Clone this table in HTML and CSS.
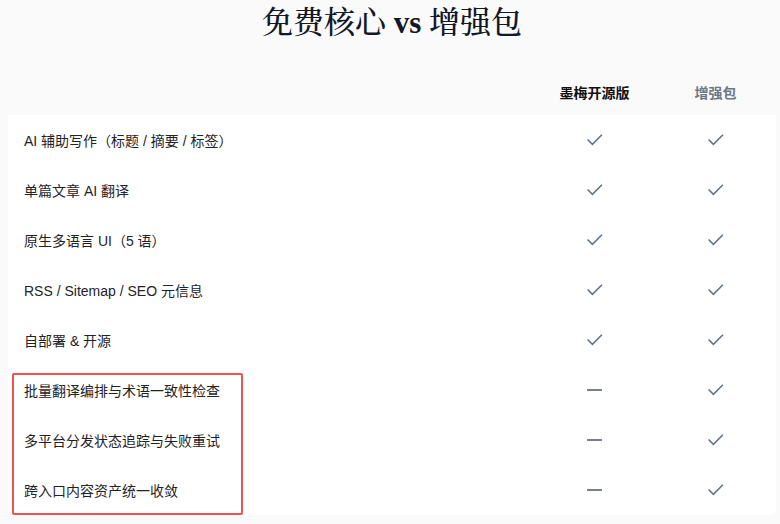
FILE: index.html
```html
<!DOCTYPE html>
<html lang="zh">
<head>
<meta charset="utf-8">
<link rel="stylesheet" href="styles.css">
</head>
<body>
<div class="page">
  <h1 class="title">免费核心 <span class="vs">vs</span> 增强包</h1>
  <div class="table">
    <div class="row head">
      <div class="cell feat"></div>
      <div class="cell plan core">墨梅开源版</div>
      <div class="cell plan pro">增强包</div>
    </div>
    <div class="body">
      <div class="row"><div class="cell feat">AI 辅助写作（标题 / 摘要 / 标签）</div><div class="cell mark"><svg class="check" viewBox="0 0 16 16"><polyline points="1.5,8 6,12.5 15,3.5"/></svg></div><div class="cell mark"><svg class="check" viewBox="0 0 16 16"><polyline points="1.5,8 6,12.5 15,3.5"/></svg></div></div>
      <div class="row"><div class="cell feat">单篇文章 AI 翻译</div><div class="cell mark"><svg class="check" viewBox="0 0 16 16"><polyline points="1.5,8 6,12.5 15,3.5"/></svg></div><div class="cell mark"><svg class="check" viewBox="0 0 16 16"><polyline points="1.5,8 6,12.5 15,3.5"/></svg></div></div>
      <div class="row"><div class="cell feat">原生多语言 UI（5 语）</div><div class="cell mark"><svg class="check" viewBox="0 0 16 16"><polyline points="1.5,8 6,12.5 15,3.5"/></svg></div><div class="cell mark"><svg class="check" viewBox="0 0 16 16"><polyline points="1.5,8 6,12.5 15,3.5"/></svg></div></div>
      <div class="row"><div class="cell feat">RSS / Sitemap / SEO 元信息</div><div class="cell mark"><svg class="check" viewBox="0 0 16 16"><polyline points="1.5,8 6,12.5 15,3.5"/></svg></div><div class="cell mark"><svg class="check" viewBox="0 0 16 16"><polyline points="1.5,8 6,12.5 15,3.5"/></svg></div></div>
      <div class="row"><div class="cell feat">自部署 &amp; 开源</div><div class="cell mark"><svg class="check" viewBox="0 0 16 16"><polyline points="1.5,8 6,12.5 15,3.5"/></svg></div><div class="cell mark"><svg class="check" viewBox="0 0 16 16"><polyline points="1.5,8 6,12.5 15,3.5"/></svg></div></div>
      <div class="row"><div class="cell feat">批量翻译编排与术语一致性检查</div><div class="cell mark"><span class="dash"></span></div><div class="cell mark"><svg class="check" viewBox="0 0 16 16"><polyline points="1.5,8 6,12.5 15,3.5"/></svg></div></div>
      <div class="row"><div class="cell feat">多平台分发状态追踪与失败重试</div><div class="cell mark"><span class="dash"></span></div><div class="cell mark"><svg class="check" viewBox="0 0 16 16"><polyline points="1.5,8 6,12.5 15,3.5"/></svg></div></div>
      <div class="row"><div class="cell feat">跨入口内容资产统一收敛</div><div class="cell mark"><span class="dash"></span></div><div class="cell mark"><svg class="check" viewBox="0 0 16 16"><polyline points="1.5,8 6,12.5 15,3.5"/></svg></div></div>
      <div class="highlight"></div>
    </div>
  </div>
</div>
</body>
</html>
```
FILE: styles.css
```css
html, body {
  margin: 0;
  padding: 0;
  background: #fafafa;
}
body {
  font-family: "Liberation Sans", "Noto Sans CJK SC", sans-serif;
  color: #1f2328;
}
.page {
  padding: 0 4px 0 8px;
}
.title {
  margin: 0 0 22px;
  font-family: "Liberation Serif", "Noto Serif CJK SC", "Noto Sans CJK SC", serif;
  font-size: 31px;
  line-height: 46px;
  font-weight: 500;
  text-align: center;
  color: #111827;
}
.title .vs {
  font-weight: 700;
}
.table {
  width: 768px;
}
.row {
  display: grid;
  grid-template-columns: 1fr 121px 121px;
  height: 50px;
  align-items: center;
  padding-bottom: 1px;
  box-sizing: border-box;
}
.row.head {
  height: 47px;
  padding-bottom: 0;
}
.body {
  position: relative;
  background: #ffffff;
  border-radius: 0 0 8px 8px;
}
.cell.feat {
  padding-left: 16px;
  font-size: 14px;
  color: #1f2328;
}
.plan {
  text-align: center;
  font-size: 14px;
  font-weight: 700;
}
.plan.core { color: #111111; }
.plan.pro { color: #6b7785; }
.mark {
  display: flex;
  justify-content: center;
  align-items: center;
}
.check {
  width: 17px;
  height: 17px;
  fill: none;
  stroke: #647386;
  stroke-width: 1.5;
}
.dash {
  display: block;
  width: 15px;
  height: 2px;
  background: #7a808a;
  margin-left: -1px;
}
.highlight {
  position: absolute;
  left: 4px;
  bottom: 0;
  width: 231px;
  height: 142px;
  box-sizing: border-box;
  border: 2px solid #f05252;
  border-radius: 2px;
  pointer-events: none;
}
```
